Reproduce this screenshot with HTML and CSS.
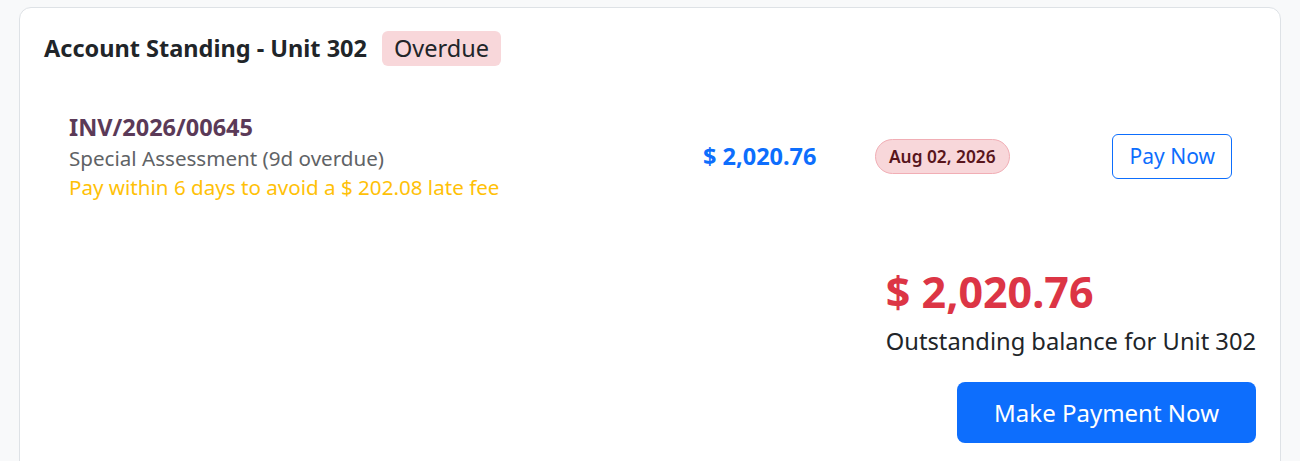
FILE: index.html
```html
<!DOCTYPE html>
<html lang="en">
<head>
    <meta charset="UTF-8">
    <meta name="viewport" content="width=device-width, initial-scale=1.0">
    <title>Account Standing</title>
    <link rel="stylesheet" href="styles.css">
</head>
<body>
    <div class="card">
        <!-- En-tête -->
        <div class="card-header">
            <h2>Account Standing - Unit 302</h2>
            <span class="status-badge">Overdue</span>
        </div>

        <!-- Facture -->
        <div class="invoice-row">
            <div class="invoice-info">
                <div class="invoice-number">INV/2026/00645</div>
                <div class="invoice-desc">Special Assessment (9d overdue)</div>
                <div class="invoice-warning">Pay within 6 days to avoid a $ 202.08 late fee</div>
            </div>
            <div class="invoice-amount">$ 2,020.76</div>
            <div class="invoice-date"><span class="date-badge">Aug 02, 2026</span></div>
            <button class="btn-outline">Pay Now</button>
        </div>

        <!-- Solde -->
        <div class="summary">
            <div class="summary-total">$ 2,020.76</div>
            <div class="summary-label">Outstanding balance for Unit 302</div>
            <button class="btn-primary">Make Payment Now</button>
        </div>
    </div>
</body>
</html>
```

FILE: styles.css
```css
* {
    margin: 0;
    padding: 0;
    box-sizing: border-box;
}

body {
    font-family: "Noto Sans", "Open Sans", sans-serif;
    background-color: #f8f9fa;
    color: #212529;
    padding: 7px 19px 0;
}

.card {
    background: #fff;
    border: 1px solid #dee2e6;
    border-radius: 12px;
    padding: 23px 24px 30px;
    min-height: 470px;
}

.card-header {
    display: flex;
    align-items: center;
    gap: 15px;
}

.card-header h2 {
    font-size: 23.5px;
    font-weight: 700;
    line-height: 35px;
}

.status-badge {
    background-color: #f8d7da;
    border-radius: 6px;
    padding: 0 12px;
    font-size: 23.5px;
    line-height: 35px;
}

.invoice-row {
    display: grid;
    grid-template-columns: 634px 172px 1fr auto;
    align-items: center;
    padding: 46px 24px 0 25px;
}

.invoice-number {
    font-size: 23.5px;
    font-weight: 700;
    color: #5b3a58;
    line-height: 30px;
}

.invoice-desc {
    font-size: 20.6px;
    color: #5f6366;
    line-height: 32px;
}

.invoice-warning {
    font-size: 20.6px;
    color: #ffc107;
    line-height: 26px;
}

.invoice-amount {
    font-size: 23.5px;
    font-weight: 700;
    color: #0d6efd;
}

.date-badge {
    display: inline-block;
    background-color: #f8d7da;
    border: 1px solid #f1aeb5;
    color: #58151c;
    border-radius: 18px;
    padding: 0 13px;
    font-size: 17.3px;
    font-weight: 600;
    line-height: 33px;
}

.btn-outline {
    font-family: inherit;
    font-size: 21px;
    color: #0d6efd;
    background: #fff;
    border: 1px solid #0d6efd;
    border-radius: 6px;
    padding: 0 16px 0 17px;
    line-height: 43px;
    cursor: pointer;
}

.summary {
    display: flex;
    flex-direction: column;
    width: fit-content;
    margin: 65px 0 0 auto;
}

.summary-total {
    font-size: 43px;
    font-weight: 700;
    color: #dc3545;
    line-height: 54px;
}

.summary-label {
    font-size: 23.7px;
    line-height: 36px;
    margin-top: 4px;
}

.btn-primary {
    align-self: flex-end;
    margin-top: 23px;
    font-family: inherit;
    font-size: 24px;
    color: #fff;
    background-color: #0d6efd;
    border: none;
    border-radius: 8px;
    padding: 0 37px;
    line-height: 61px;
    cursor: pointer;
}
```
